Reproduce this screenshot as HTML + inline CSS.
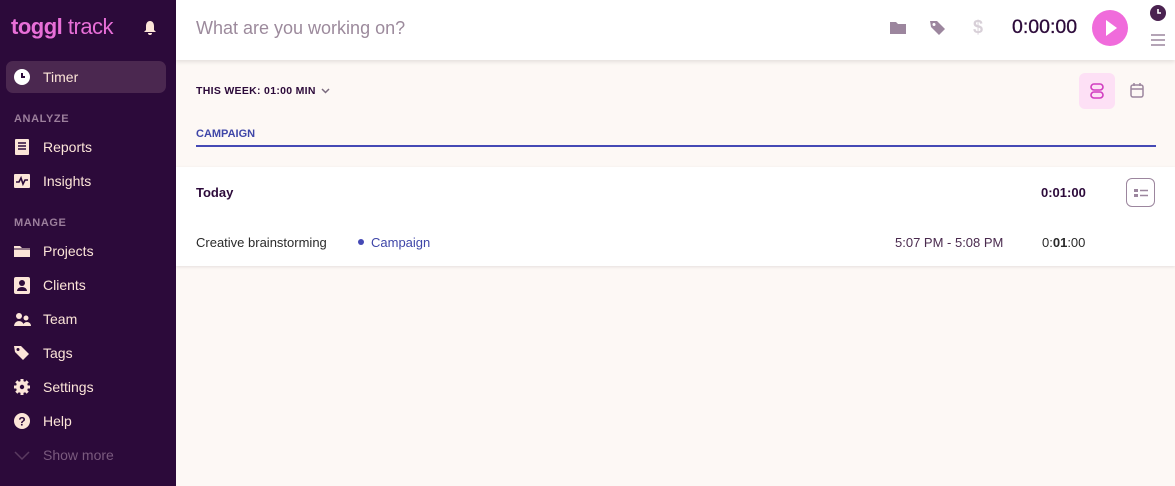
<!DOCTYPE html>
<html><head><meta charset="utf-8"><style>
*{box-sizing:border-box;margin:0;padding:0}
body{width:1175px;height:486px;overflow:hidden;font-family:"Liberation Sans",sans-serif;background:#fdf8f5;position:relative}
.sb{position:absolute;left:0;top:0;width:176px;height:486px;background:#2c0a3a;color:#fce5d8}
.logo{position:absolute;left:11px;top:14px;font-size:22px;color:#e86fd8;letter-spacing:-0.5px}
.logo b{font-weight:900}
.item{position:absolute;left:6px;width:160px;height:32px;display:flex;align-items:center;font-size:14px;color:#fce5d8}
.item svg{position:absolute;left:8px}
.item span{position:absolute;left:37px}
.act{background:#4b2850;border-radius:7px}
.sec{position:absolute;left:14px;font-size:11px;color:#9c7f9c;letter-spacing:.6px;font-weight:bold}
.top{position:absolute;left:176px;top:0;right:0;height:60px;background:#fff;box-shadow:0 2px 4px rgba(0,0,0,.1)}
.ph{position:absolute;left:20px;top:18px;font-size:18px;color:#9c8a9c}
.tm{position:absolute;left:836px;top:16px;font-size:19.5px;color:#2c0a3a;-webkit-text-stroke:0.3px #2c0a3a}
.play{position:absolute;left:916px;top:10px;width:36px;height:36px;border-radius:50%;background:#f06bdb}
</style></head><body>
<div class="sb">
<div class="logo"><b>toggl</b> track</div>
<svg style="position:absolute;left:143px;top:20px" width="14" height="16" viewBox="0 0 14 16"><path d="M7 1C4 1 3 4 3 6v4L1 12h12l-2-2V6c0-2-1-5-4-5z M5 13h4a2 2 0 0 1-4 0z" fill="#fce5d8"/></svg>
<div class="item act" style="top:61px"><svg width="16" height="16" viewBox="0 0 16 16"><circle cx="8" cy="8" r="8" fill="#fff"/><path d="M8 4v4h3" stroke="#2c0a3a" stroke-width="2" fill="none"/></svg><span>Timer</span></div>
<div class="sec" style="top:113px">ANALYZE</div>
<div class="item" style="top:131px"><svg width="16" height="16"><rect x="1" y="0" width="14" height="16" rx="1" fill="#fce5d8"/><path d="M4 4h8M4 7h8M4 10h8" stroke="#2c0a3a" stroke-width="1.5"/></svg><span>Reports</span></div>
<div class="item" style="top:165px"><svg width="16" height="16"><rect x="0" y="1" width="16" height="14" rx="1" fill="#fce5d8"/><path d="M2 9h3l2-4 2 6 2-4h3" stroke="#2c0a3a" stroke-width="1.6" fill="none"/></svg><span>Insights</span></div>
<div class="sec" style="top:217px">MANAGE</div>
<div class="item" style="top:235px"><svg width="16" height="16"><path d="M0 3h6l2 2h8v9H0z" fill="#fce5d8"/><path d="M0 6h16" stroke="#2c0a3a"/></svg><span>Projects</span></div>
<div class="item" style="top:269px"><svg width="16" height="18"><rect x="0" y="1" width="16" height="17" rx="2" fill="#fce5d8"/><circle cx="8" cy="7" r="3" fill="#2c0a3a"/><path d="M3 15a5 4 0 0 1 10 0z" fill="#2c0a3a"/></svg><span>Clients</span></div>
<div class="item" style="top:303px"><svg width="18" height="16"><circle cx="5" cy="5" r="3" fill="#fce5d8"/><path d="M0 15a5 5 0 0 1 10 0z" fill="#fce5d8"/><circle cx="12" cy="7" r="2.5" fill="#fce5d8"/><path d="M9 15a4 4 0 0 1 8 0z" fill="#fce5d8"/></svg><span>Team</span></div>
<div class="item" style="top:337px"><svg width="16" height="16"><path d="M0 1h7l8 8-6 6-8-8z" fill="#fce5d8"/><circle cx="4" cy="4.5" r="1.5" fill="#2c0a3a"/></svg><span>Tags</span></div>
<div class="item" style="top:371px"><svg width="16" height="16" viewBox="0 0 16 16"><circle cx="8" cy="8" r="6" fill="#fce5d8"/><path d="M8 0v16M0 8h16M2.3 2.3l11.4 11.4M13.7 2.3L2.3 13.7" stroke="#fce5d8" stroke-width="3"/><circle cx="8" cy="8" r="2.2" fill="#2c0a3a"/></svg><span>Settings</span></div>
<div class="item" style="top:405px"><svg width="16" height="16"><circle cx="8" cy="8" r="8" fill="#fce5d8"/><text x="8" y="12.5" font-size="12" font-weight="bold" text-anchor="middle" fill="#2c0a3a" font-family="Liberation Sans">?</text></svg><span>Help</span></div>
<div class="item" style="top:439px;color:#7a5a7e"><svg width="16" height="16"><path d="M1 5l7 7 7-7" stroke="#5a3a60" stroke-width="1.5" fill="none"/></svg><span>Show more</span></div>
</div>
<div class="top">
<div class="ph">What are you working on?</div>
<svg style="position:absolute;left:714px;top:21px" width="16" height="14"><path d="M0 1h6l2 2h8v10H0z" fill="#9c869e"/></svg>
<svg style="position:absolute;left:754px;top:20px" width="16" height="16"><path d="M0 1h7l8 8-6 6-8-8z" fill="#9c869e"/><circle cx="4" cy="4.5" r="1.5" fill="#fff"/></svg>
<div style="position:absolute;left:797px;top:17px;font-size:18px;color:#d8d0d8;font-weight:bold">$</div>
<div class="tm">0:00:00</div>
<div class="play"><svg width="36" height="36"><path d="M14 10l11 8-11 8z" fill="#fff"/></svg></div>
<svg style="position:absolute;left:974px;top:5px" width="16" height="16"><circle cx="8" cy="8" r="8" fill="#4a2250"/><path d="M8 4v4h3" stroke="#fff" stroke-width="1.6" fill="none"/></svg>
<svg style="position:absolute;left:975px;top:34px" width="14" height="12"><path d="M0 1h14M0 6h14M0 11h14" stroke="#9c869e" stroke-width="1.5"/></svg>
</div>
<div style="position:absolute;left:196px;top:85px;font-size:10.5px;font-weight:bold;color:#2c0a3a;letter-spacing:.3px">THIS WEEK: 01:00 MIN</div>
<svg style="position:absolute;left:321px;top:88px" width="9" height="6"><path d="M1 1l3.5 3.5L8 1" stroke="#7a6a7e" stroke-width="1.5" fill="none"/></svg>
<div style="position:absolute;left:1079px;top:73px;width:36px;height:36px;border-radius:6px;background:#fde0f5"><svg width="36" height="36"><rect x="12" y="11" width="12" height="6" rx="3" stroke="#d13cc0" stroke-width="1.6" fill="none"/><rect x="12" y="19" width="12" height="6" rx="3" stroke="#d13cc0" stroke-width="1.6" fill="none"/></svg></div>
<svg style="position:absolute;left:1130px;top:83px" width="14" height="15"><rect x="1" y="2" width="12" height="12" rx="2" stroke="#9c869e" stroke-width="1.5" fill="none"/><path d="M1 6h12M4 0v3M10 0v3" stroke="#9c869e" stroke-width="1.5"/></svg>
<div style="position:absolute;left:196px;top:128px;font-size:11px;font-weight:bold;color:#3f46a8">CAMPAIGN</div>
<div style="position:absolute;left:196px;top:145px;width:960px;height:2px;background:#4549b5"></div>
<div style="position:absolute;left:176px;top:167px;right:0;height:99px;background:#fff;box-shadow:0 1px 3px rgba(0,0,0,.1)">
<div style="position:absolute;left:20px;top:18px;font-size:13px;font-weight:bold;color:#2c0a3a">Today</div>
<div style="position:absolute;left:865px;top:18px;font-size:13px;font-weight:bold;color:#2c0a3a">0:01:00</div>
<div style="position:absolute;left:950px;top:11px;width:29px;height:29px;border:1px solid #9c869e;border-radius:6px"><svg width="29" height="29"><rect x="7" y="10" width="4" height="3" fill="#9c869e"/><rect x="7" y="15" width="4" height="3" fill="#9c869e"/><path d="M13 11.5h8M13 16.5h8" stroke="#9c869e" stroke-width="1.5"/></svg></div>
<div style="position:absolute;left:20px;top:68px;font-size:13px;color:#2a2a2a">Creative brainstorming</div>
<div style="position:absolute;left:182px;top:72px;width:6px;height:6px;border-radius:50%;background:#4549b5"></div>
<div style="position:absolute;left:195px;top:68px;font-size:13px;color:#3f46a8">Campaign</div>
<div style="position:absolute;left:719px;top:68px;font-size:13px;color:#4a2a4e">5:07 PM - 5:08 PM</div>
<div style="position:absolute;left:866px;top:68px;font-size:13px;color:#2a2a2a">0:<b>01</b>:00</div>
</div>
</body></html>
